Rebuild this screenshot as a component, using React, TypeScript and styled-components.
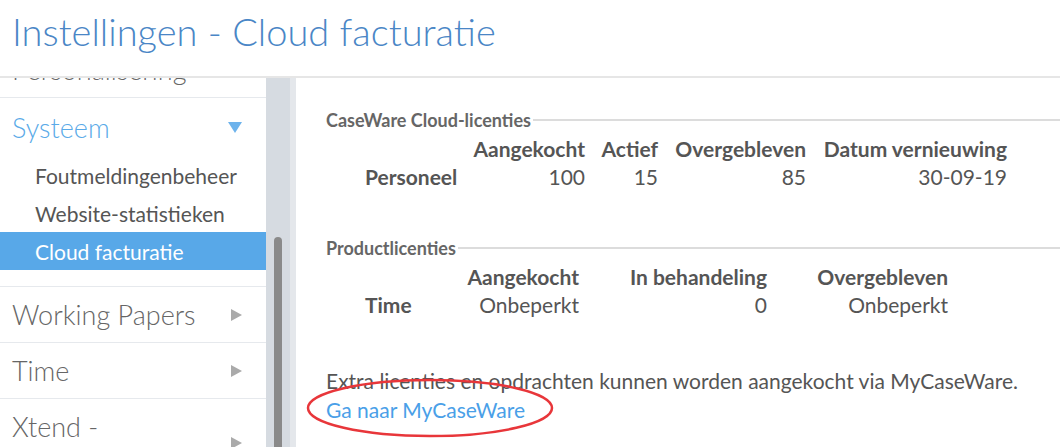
import React from "react";
import styled, { createGlobalStyle } from "styled-components";

const GlobalStyle = createGlobalStyle`
  html, body { margin: 0; padding: 0; background: #fff; }
  body { font-family: Lato, "Noto Sans", sans-serif; }
  * { box-sizing: border-box; }
`;

const Page = styled.div`
  height: 447px;
  display: flex;
  flex-direction: column;
  overflow: hidden;
`;

const Header = styled.header`
  height: 78px;
  flex: none;
  padding: 10px 12px 0;
  border-bottom: 2px solid #e6e6e6;
`;

const Title = styled.h1`
  margin: 0;
  font-size: 38px;
  line-height: 43px;
  font-weight: 300;
  color: #4a86c6;
`;

const Body = styled.div`
  flex: 1;
  min-height: 0;
  display: flex;
`;

const Sidebar = styled.nav`
  width: 266px;
  flex: none;
  overflow: hidden;
`;

/* scroll offset of the sidebar list */
const NavList = styled.div`
  margin-top: -36px;
`;

const NavRow = styled.div<{ $tall?: boolean }>`
  display: flex;
  align-items: center;
  justify-content: space-between;
  min-height: 56px;
  padding: ${(p) => (p.$tall ? "12px 24px 12px 12px" : "0 24px 0 12px")};
  border-bottom: 1px solid #e6e9ed;
  font-size: 27px;
  line-height: 32px;
  font-weight: 300;
  color: #666;
`;

const NavLabel = styled.span`
  max-width: 200px;
`;

const Group = styled.div`
  padding-bottom: 16px;
  border-bottom: 1px solid #e6e9ed;
`;

const GroupHeader = styled.div`
  height: 58px;
  display: flex;
  align-items: center;
  justify-content: space-between;
  padding: 0 24px 0 12px;
  font-size: 27px;
  font-weight: 300;
  color: #5aaae8;
`;

const SubItem = styled.div<{ $active?: boolean }>`
  height: 38px;
  display: flex;
  align-items: center;
  padding-left: 35px;
  font-size: 21px;
  font-weight: 400;
  color: ${(p) => (p.$active ? "#fff" : "#555")};
  background: ${(p) => (p.$active ? "#58a8e8" : "transparent")};
`;

const ScrollTrack = styled.div`
  width: 30px;
  flex: none;
  display: flex;
  flex-direction: column;
  background: linear-gradient(to right, #d6dbe1 0 24px, #e4e7eb 24px);
`;

const ScrollThumb = styled.div`
  margin: 159px 0 0 8px;
  width: 8px;
  flex: 1;
  background: #8a8a8a;
  border-radius: 4px 4px 0 0;
`;

const Content = styled.main`
  flex: 1;
  padding: 32px 0 0 30px;
  color: #555;
`;

const Section = styled.section`
  margin-bottom: 47px;
`;

const Legend = styled.div`
  display: flex;
  align-items: center;
  gap: 2px;
`;

const LegendText = styled.span`
  font-size: 18px;
  line-height: 20px;
  font-weight: 700;
  color: #666;
`;

const LegendLine = styled.span`
  flex: 1;
  height: 2px;
  background: #dcdcdc;
`;

const Grid = styled.div<{ $cols: string }>`
  display: grid;
  grid-template-columns: ${(p) => p.$cols};
  padding-left: 39px;
  margin-top: 5px;
  font-size: 21px;
  line-height: 28px;
`;

const Cell = styled.div<{ $head?: boolean; $label?: boolean }>`
  text-align: ${(p) => (p.$label ? "left" : "right")};
  font-weight: ${(p) => (p.$head || p.$label ? 700 : 400)};
  white-space: nowrap;
`;

const Note = styled.p`
  margin: 0;
  font-size: 21px;
  line-height: 29px;
  color: #555;
`;

const LinkWrap = styled.span`
  position: relative;
  display: inline-block;
`;

const Link = styled.a`
  color: #4a9fe8;
  text-decoration: none;
`;

const Ellipse = styled.svg`
  position: absolute;
  left: -21px;
  top: -17px;
  pointer-events: none;
`;

const RightArrow = () => (
  <svg width="11" height="12" viewBox="0 0 11 12">
    <polygon points="0,0 11,6 0,12" fill="#aaa" />
  </svg>
);

const DownArrow = () => (
  <svg width="14" height="11" viewBox="0 0 14 11">
    <polygon points="0,0 14,0 7,11" fill="#6db3ec" />
  </svg>
);

type TableProps = { cols: string; head: string[]; row: string[] };

const LicenseTable = ({ cols, head, row }: TableProps) => (
  <Grid $cols={cols}>
    <Cell $head />
    {head.map((h) => (
      <Cell key={h} $head>
        {h}
      </Cell>
    ))}
    {row.map((v, i) => (
      <Cell key={i} $label={i === 0}>
        {v}
      </Cell>
    ))}
  </Grid>
);

export default function App() {
  return (
    <Page>
      <GlobalStyle />
      <Header>
        <Title>Instellingen - Cloud facturatie</Title>
      </Header>
      <Body>
        <Sidebar>
          <NavList>
            <NavRow>
              <NavLabel>Personalisering</NavLabel>
              <RightArrow />
            </NavRow>
            <Group>
              <GroupHeader>
                <span>Systeem</span>
                <DownArrow />
              </GroupHeader>
              <SubItem>Foutmeldingenbeheer</SubItem>
              <SubItem>Website-statistieken</SubItem>
              <SubItem $active>Cloud facturatie</SubItem>
            </Group>
            <NavRow>
              <NavLabel>Working Papers</NavLabel>
              <RightArrow />
            </NavRow>
            <NavRow>
              <NavLabel>Time</NavLabel>
              <RightArrow />
            </NavRow>
            <NavRow $tall>
              <NavLabel>Xtend - Applicatiebeheer</NavLabel>
              <RightArrow />
            </NavRow>
          </NavList>
        </Sidebar>
        <ScrollTrack>
          <ScrollThumb />
        </ScrollTrack>
        <Content>
          <Section>
            <Legend>
              <LegendText>CaseWare Cloud-licenties</LegendText>
              <LegendLine />
            </Legend>
            <LicenseTable
              cols="100px 120px 73px 148px 201px"
              head={["Aangekocht", "Actief", "Overgebleven", "Datum vernieuwing"]}
              row={["Personeel", "100", "15", "85", "30-09-19"]}
            />
          </Section>
          <Section>
            <Legend>
              <LegendText>Productlicenties</LegendText>
              <LegendLine />
            </Legend>
            <LicenseTable
              cols="100px 114px 188px 181px"
              head={["Aangekocht", "In behandeling", "Overgebleven"]}
              row={["Time", "Onbeperkt", "0", "Onbeperkt"]}
            />
          </Section>
          <Note>Extra licenties en opdrachten kunnen worden aangekocht via MyCaseWare.</Note>
          <Note>
            <LinkWrap>
              <Link href="#">Ga naar MyCaseWare</Link>
              <Ellipse width="250" height="62" viewBox="0 0 250 62">
                <ellipse cx="125" cy="30" rx="122" ry="28" fill="none" stroke="#e8363a" strokeWidth="2.5" />
              </Ellipse>
            </LinkWrap>
          </Note>
        </Content>
      </Body>
    </Page>
  );
}
